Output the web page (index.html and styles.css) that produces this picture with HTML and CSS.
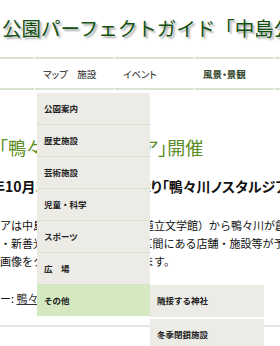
FILE: index.html
```html
<!DOCTYPE html>
<html lang="ja">
<head>
<meta charset="utf-8">
<title>中島公園パーフェクトガイド</title>
<link rel="stylesheet" href="styles.css">
</head>
<body>
<header class="site-head">
  <h1 class="site-title">公園パーフェクトガイド「中島公園」</h1>
</header>
<nav class="gnav">
  <ul class="gnav-list">
    <li class="gnav-item"><a class="gnav-link" href="#">ホーム</a></li>
    <li class="gnav-item has-drop">
      <a class="gnav-link" href="#">マップ　施設</a>
      <ul class="drop">
        <li class="drop-item"><a href="#">公園案内</a></li>
        <li class="drop-item"><a href="#">歴史施設</a></li>
        <li class="drop-item"><a href="#">芸術施設</a></li>
        <li class="drop-item"><a href="#">児童・科学</a></li>
        <li class="drop-item"><a href="#">スポーツ</a></li>
        <li class="drop-item"><a href="#">広　場</a></li>
        <li class="drop-item is-open"><a href="#">その他</a>
          <ul class="sub">
            <li class="sub-item"><a href="#">隣接する神社</a></li>
            <li class="sub-item"><a href="#">冬季閉鎖施設</a></li>
          </ul>
        </li>
      </ul>
    </li>
    <li class="gnav-item"><a class="gnav-link" href="#">イベント</a></li>
    <li class="gnav-item"><a class="gnav-link gnav-link--dark" href="#">風景・景観</a></li>
    <li class="gnav-item"><a class="gnav-link" href="#">自然</a></li>
  </ul>
</nav>
<main class="content">
  <h2 class="entry-title">「鴨々川ノスタルジア」開催</h2>
  <p class="lead">年10月19日（土）～20日より「鴨々川ノスタルジア」開催</p>
  <p class="body-text">アは中島公園（札幌市・北海道立文学館）から鴨々川が創成川に分かれる付近<br>・新善光寺までの約1.5kmの区間にある店舗・施設等が予定しているイベントです。<br>画像をクリックすると拡大します。</p>
  <p class="body-text cat">ー: <a class="cat-link" href="#">鴨々川ノスタルジア</a></p>
  <hr class="rule">
</main>
</body>
</html>
```
FILE: styles.css
```css
html, body {
  margin: 0;
  padding: 0;
  background: #fff;
  overflow: hidden;
}
body {
  width: 280px;
  height: 346px;
  font-family: "Noto Sans CJK JP", "Noto Sans", sans-serif;
  color: #111;
}
ul {
  list-style: none;
  margin: 0;
  padding: 0;
}
a {
  text-decoration: none;
  color: inherit;
}

/* header */
.site-head {
  height: 57px;
  white-space: nowrap;
}
.site-title {
  margin: 0;
  padding: 16px 0 0 2px;
  font-size: 19.5px;
  line-height: 24px;
  font-weight: 400;
  color: #12500f;
  text-shadow: 2px 2px 2px rgba(0, 0, 0, 0.35);
}

/* global nav */
.gnav {
  position: relative;
  z-index: 5;
}
.gnav-list {
  display: flex;
  gap: 1px;
  margin-left: -45px;
  width: 500px;
}
.gnav-item {
  position: relative;
  flex: 0 0 79px;
  height: 29px;
  border-top: 2px solid #d8e3d2;
  border-bottom: 2px solid #d8e3d2;
}
.gnav-link {
  display: block;
  padding: 2px 0 0 8px;
  line-height: 27px;
  font-size: 9.5px;
  color: #222;
  white-space: nowrap;
  font-feature-settings: "palt";
}
.gnav-link--dark {
  color: #33452a;
  font-weight: 700;
}

/* dropdown */
.drop {
  position: absolute;
  top: calc(100% + 5px);
  left: 2px;
  width: 113px;
  background: #ecebe6;
}
.drop-item {
  position: relative;
  height: 31px;
  border-bottom: 1px solid #d2e5cb;
}
.drop-item:last-child {
  border-bottom: 0;
}
.drop-item > a {
  display: block;
  padding-left: 7px;
  line-height: 31px;
  font-size: 8.5px;
  font-weight: 700;
  color: #222;
  white-space: nowrap;
}
.drop-item.is-open {
  background: #d5e9c0;
}
.sub {
  position: absolute;
  top: 0;
  left: 100%;
  width: 114px;
}
.sub-item {
  height: 32px;
  background: #ecebe6;
  border-bottom: 2px solid #fff;
}
.sub-item > a {
  display: block;
  padding-left: 7px;
  line-height: 30px;
  font-size: 8.5px;
  font-weight: 700;
  color: #222;
  white-space: nowrap;
}

/* content */
.content {
  margin-left: -11px;
  white-space: nowrap;
}
.entry-title {
  margin: 45px 0 0;
  padding-left: 10px;
  font-size: 18px;
  line-height: 24px;
  font-weight: 400;
  color: #5a8d22;
  font-feature-settings: "palt";
}
.lead {
  margin: 17px 0 0;
  padding-left: 2px;
  font-size: 14px;
  line-height: 20px;
  font-weight: 700;
  color: #111;
  font-feature-settings: "palt";
}
.body-text {
  margin: 20px 0 0;
  padding-left: 11px;
  font-size: 11px;
  line-height: 18px;
  color: #111;
}
.cat {
  margin-top: 19px;
}
.cat-link {
  color: #333;
  text-decoration: underline;
}
.rule {
  margin: 18px 0 0;
  border: 0;
  height: 2px;
  background: #e4e4e4;
  width: 600px;
}
```
